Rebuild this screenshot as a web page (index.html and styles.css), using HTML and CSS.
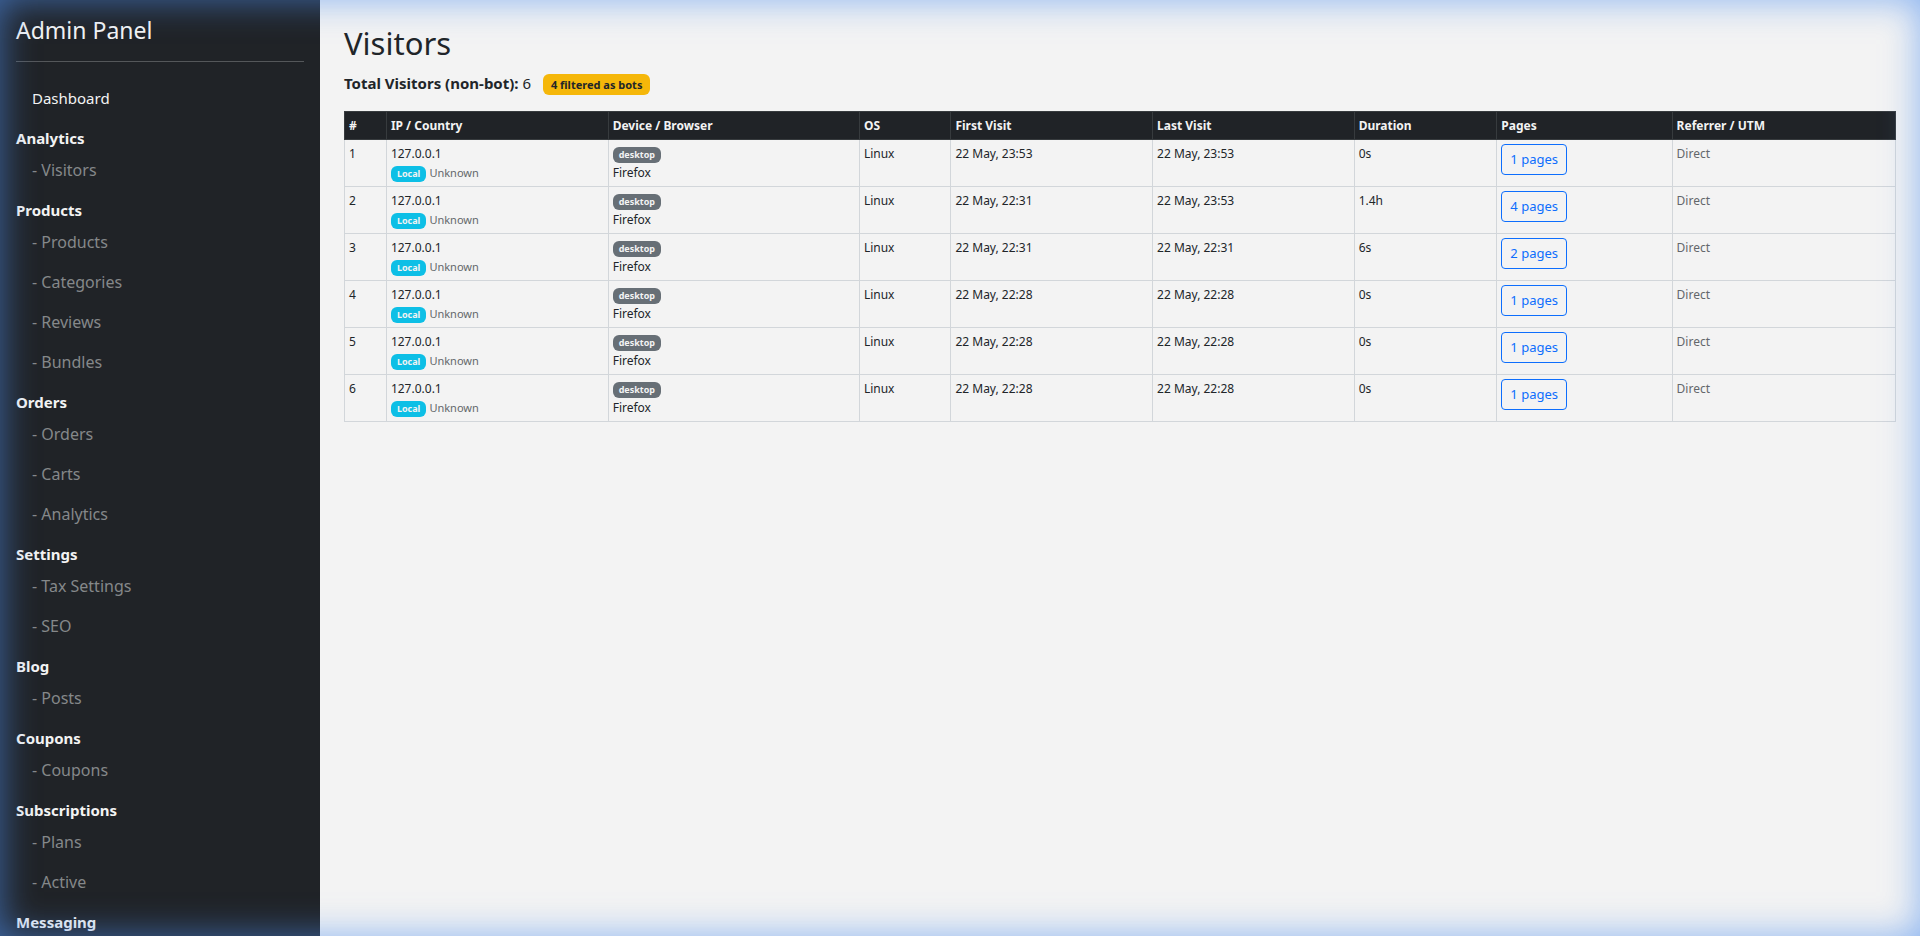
FILE: index.html
```
<!DOCTYPE html>
<html lang="en">
<head>
    <meta charset="UTF-8">
    <meta name="viewport" content="width=device-width, initial-scale=1.0">
    <title>Visitors - Admin Panel</title>
    <link rel="stylesheet" href="styles.css">
</head>
<body>
    <div class="layout">
        <nav class="sidebar">
            <h4 class="sidebar-title">Admin Panel</h4>
            <hr>
            <a class="nav-link nav-main" href="#">Dashboard</a>

            <div class="nav-heading">Analytics</div>
            <a class="nav-link" href="#">- Visitors</a>

            <div class="nav-heading">Products</div>
            <a class="nav-link" href="#">- Products</a>
            <a class="nav-link" href="#">- Categories</a>
            <a class="nav-link" href="#">- Reviews</a>
            <a class="nav-link" href="#">- Bundles</a>

            <div class="nav-heading">Orders</div>
            <a class="nav-link" href="#">- Orders</a>
            <a class="nav-link" href="#">- Carts</a>
            <a class="nav-link" href="#">- Analytics</a>

            <div class="nav-heading">Settings</div>
            <a class="nav-link" href="#">- Tax Settings</a>
            <a class="nav-link" href="#">- SEO</a>

            <div class="nav-heading">Blog</div>
            <a class="nav-link" href="#">- Posts</a>

            <div class="nav-heading">Coupons</div>
            <a class="nav-link" href="#">- Coupons</a>

            <div class="nav-heading">Subscriptions</div>
            <a class="nav-link" href="#">- Plans</a>
            <a class="nav-link" href="#">- Active</a>

            <div class="nav-heading">Messaging</div>
        </nav>

        <main class="content">
            <h2>Visitors</h2>
            <p class="summary">
                <strong>Total Visitors (non-bot):</strong> 6
                <span class="badge badge-warning">4 filtered as bots</span>
            </p>

            <table class="visitors">
                <colgroup>
                    <col class="col-id">
                    <col class="col-ip">
                    <col class="col-device">
                    <col class="col-os">
                    <col class="col-date">
                    <col class="col-date">
                    <col class="col-duration">
                    <col class="col-pages">
                    <col class="col-referrer">
                </colgroup>
                <thead>
                    <tr>
                        <th>#</th>
                        <th>IP / Country</th>
                        <th>Device / Browser</th>
                        <th>OS</th>
                        <th>First Visit</th>
                        <th>Last Visit</th>
                        <th>Duration</th>
                        <th>Pages</th>
                        <th>Referrer / UTM</th>
                    </tr>
                </thead>
                <tbody>
                    <tr>
                        <td>1</td>
                        <td>127.0.0.1<br><span class="badge badge-info">Local</span> <small>Unknown</small></td>
                        <td><span class="badge badge-secondary">desktop</span><br>Firefox</td>
                        <td>Linux</td>
                        <td>22 May, 23:53</td>
                        <td>22 May, 23:53</td>
                        <td>0s</td>
                        <td><button class="btn" type="button">1 pages</button></td>
                        <td class="muted">Direct</td>
                    </tr>
                    <tr>
                        <td>2</td>
                        <td>127.0.0.1<br><span class="badge badge-info">Local</span> <small>Unknown</small></td>
                        <td><span class="badge badge-secondary">desktop</span><br>Firefox</td>
                        <td>Linux</td>
                        <td>22 May, 22:31</td>
                        <td>22 May, 23:53</td>
                        <td>1.4h</td>
                        <td><button class="btn" type="button">4 pages</button></td>
                        <td class="muted">Direct</td>
                    </tr>
                    <tr>
                        <td>3</td>
                        <td>127.0.0.1<br><span class="badge badge-info">Local</span> <small>Unknown</small></td>
                        <td><span class="badge badge-secondary">desktop</span><br>Firefox</td>
                        <td>Linux</td>
                        <td>22 May, 22:31</td>
                        <td>22 May, 22:31</td>
                        <td>6s</td>
                        <td><button class="btn" type="button">2 pages</button></td>
                        <td class="muted">Direct</td>
                    </tr>
                    <tr>
                        <td>4</td>
                        <td>127.0.0.1<br><span class="badge badge-info">Local</span> <small>Unknown</small></td>
                        <td><span class="badge badge-secondary">desktop</span><br>Firefox</td>
                        <td>Linux</td>
                        <td>22 May, 22:28</td>
                        <td>22 May, 22:28</td>
                        <td>0s</td>
                        <td><button class="btn" type="button">1 pages</button></td>
                        <td class="muted">Direct</td>
                    </tr>
                    <tr>
                        <td>5</td>
                        <td>127.0.0.1<br><span class="badge badge-info">Local</span> <small>Unknown</small></td>
                        <td><span class="badge badge-secondary">desktop</span><br>Firefox</td>
                        <td>Linux</td>
                        <td>22 May, 22:28</td>
                        <td>22 May, 22:28</td>
                        <td>0s</td>
                        <td><button class="btn" type="button">1 pages</button></td>
                        <td class="muted">Direct</td>
                    </tr>
                    <tr>
                        <td>6</td>
                        <td>127.0.0.1<br><span class="badge badge-info">Local</span> <small>Unknown</small></td>
                        <td><span class="badge badge-secondary">desktop</span><br>Firefox</td>
                        <td>Linux</td>
                        <td>22 May, 22:28</td>
                        <td>22 May, 22:28</td>
                        <td>0s</td>
                        <td><button class="btn" type="button">1 pages</button></td>
                        <td class="muted">Direct</td>
                    </tr>
                </tbody>
            </table>
        </main>
    </div>
    <div class="glow"></div>
</body>
</html>
```

FILE: styles.css
```
* {
    box-sizing: border-box;
}
body {
    margin: 0;
    font-family: "Noto Sans", sans-serif;
    font-size: 15px;
    line-height: 24px;
    color: #212529;
    background-color: #f3f3f3;
}
.layout {
    display: flex;
    height: 100vh;
}

/* Sidebar */
.sidebar {
    flex: 0 0 320px;
    padding: 16px;
    overflow: hidden;
    color: #f3f3f3;
    background-color: #202327;
}
.sidebar-title {
    margin: 0;
    font-size: 23px;
    font-weight: 400;
    line-height: 29px;
}
.sidebar hr {
    margin: 16px 0;
    border: 0;
    border-top: 1px solid #54575a;
}
.nav-link {
    display: block;
    padding: 8px 16px;
    font-size: 16px;
    color: #85888a;
    text-decoration: none;
}
.nav-main {
    font-size: 15px;
    color: #f3f3f3;
}
.nav-heading {
    margin-top: 8px;
    font-weight: 700;
}

/* Main content */
.content {
    flex: 1;
    min-width: 0;
    padding: 24px;
    overflow: auto;
}
h2 {
    margin: 0 0 8px;
    font-size: 31px;
    font-weight: 400;
    line-height: 39px;
}
.summary {
    margin: 0 0 16px;
}
.summary strong {
    font-weight: 700;
}
.badge {
    display: inline-block;
    padding: 3px 6px;
    border-radius: 6px;
    font-size: 9px;
    font-weight: 700;
    line-height: 10px;
    color: #f3f3f3;
    vertical-align: baseline;
}
.badge-warning {
    margin-left: 8px;
    padding: 4px 8px;
    font-size: 11px;
    line-height: 13px;
    color: #212529;
    background-color: #f5b70a;
}
.badge-info {
    background-color: #0dbfe6;
}
.badge-secondary {
    background-color: #676f76;
}

/* Visitor table */
.visitors {
    width: 100%;
    table-layout: fixed;
    border-collapse: collapse;
    font-size: 12px;
    line-height: 19px;
}
.visitors th,
.visitors td {
    padding: 4px;
    border: 1px solid #d2d6da;
    text-align: left;
    vertical-align: top;
}
.visitors th {
    border-color: #373b3e;
    font-weight: 700;
    color: #f3f3f3;
    background-color: #202327;
}
.visitors small {
    font-size: 11px;
    color: #63676b;
}
.visitors .muted {
    color: #63676b;
}
.col-id {
    width: 2.7%;
}
.col-ip {
    width: 14.3%;
}
.col-device {
    width: 16.2%;
}
.col-os {
    width: 5.9%;
}
.col-date {
    width: 13%;
}
.col-duration {
    width: 9.2%;
}
.col-pages {
    width: 11.3%;
}
.col-referrer {
    width: 14.4%;
}
.btn {
    display: block;
    padding: 4px 8px;
    border: 1px solid #0d6efd;
    border-radius: 4px;
    font-family: inherit;
    font-size: 13px;
    line-height: 21px;
    color: #0d6efd;
    background: transparent;
    cursor: pointer;
}

/* Soft blue light around the window edge */
.glow {
    position: fixed;
    inset: 0;
    pointer-events: none;
    box-shadow: inset 0 0 36px rgba(80, 145, 240, 0.65);
}
```
